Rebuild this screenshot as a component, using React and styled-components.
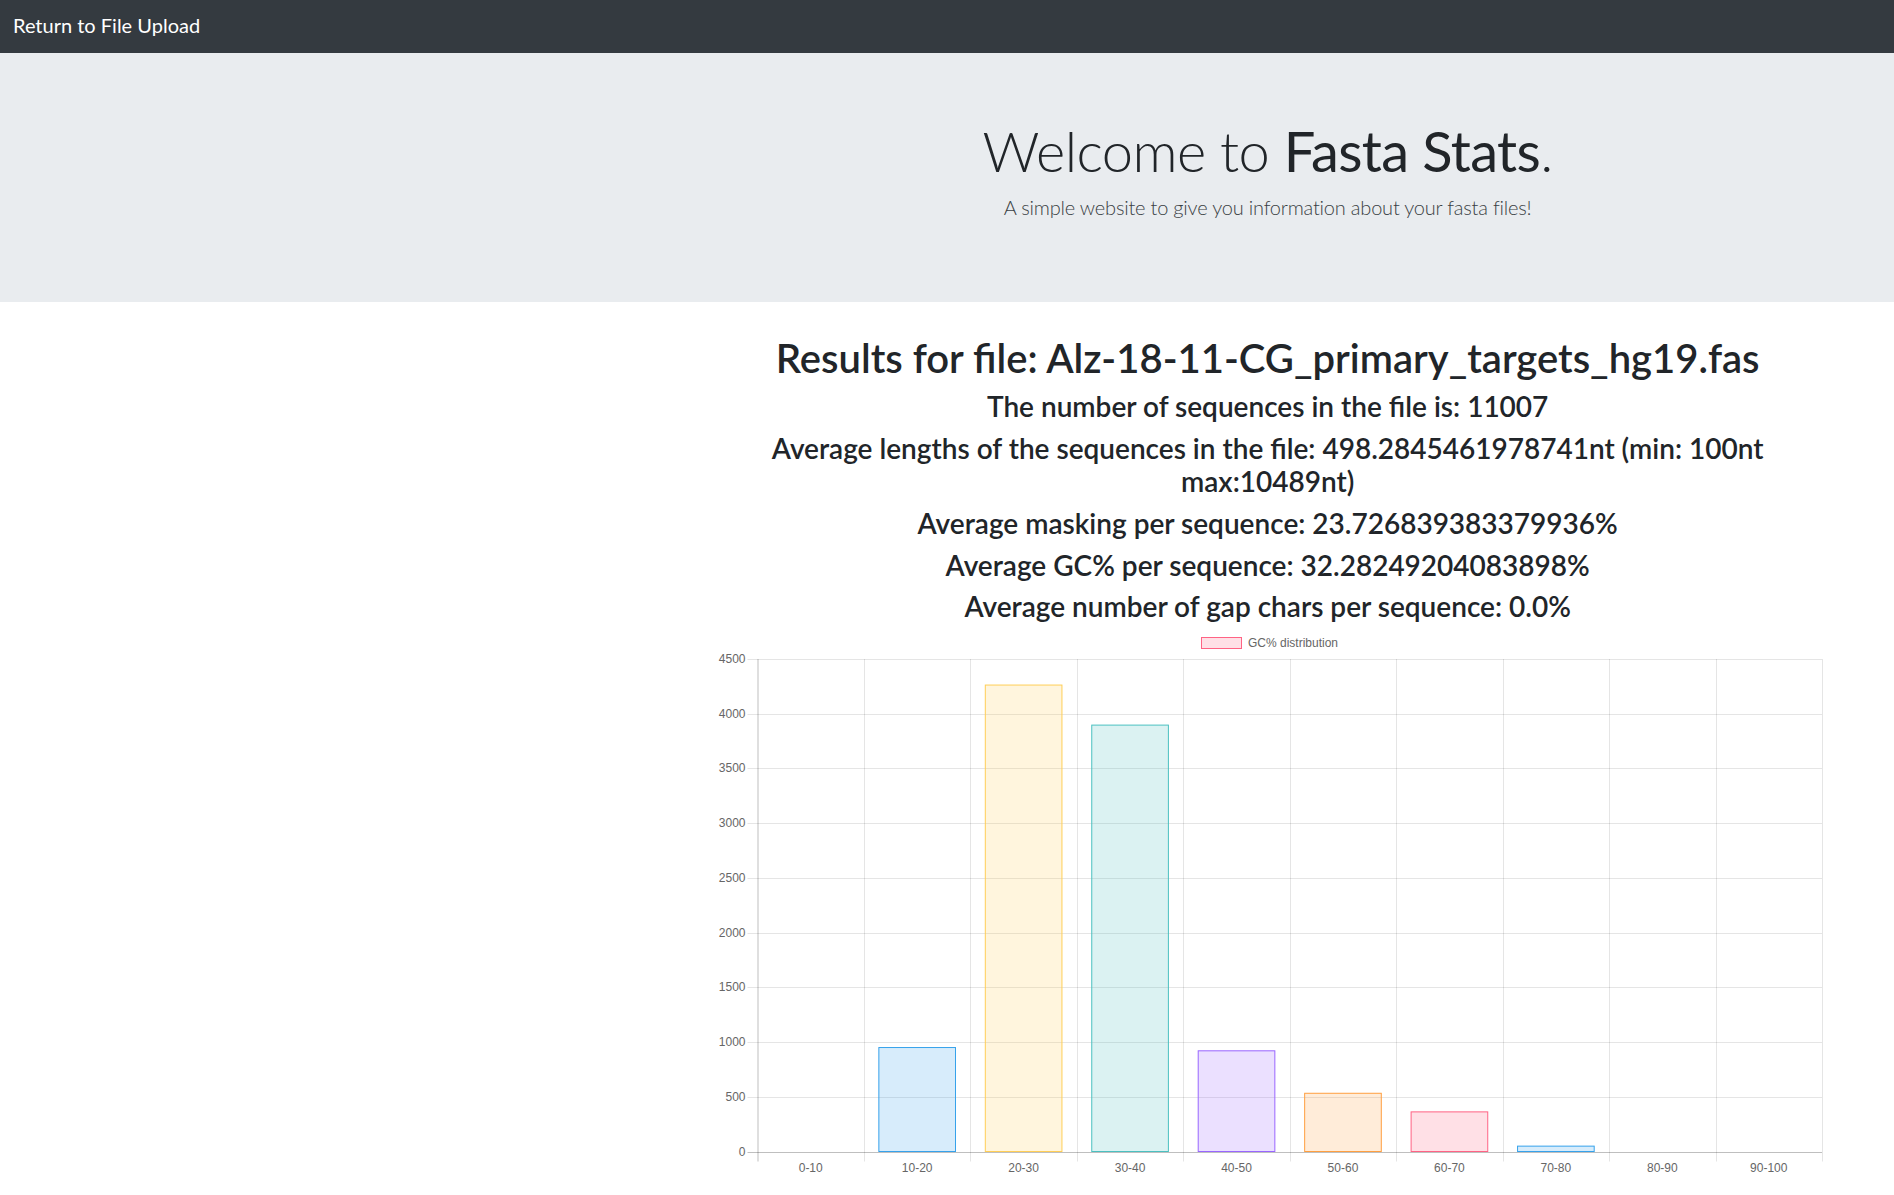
import React from "react";
import styled, { createGlobalStyle } from "styled-components";

const GlobalStyle = createGlobalStyle`
  body {
    margin: 0;
    font-family: "Lato", "Open Sans", sans-serif;
    color: #212529;
    background: #fff;
    overflow-x: hidden;
  }
`;

const bins = [
  { label: "0-10", value: 0, color: "255, 99, 132" },
  { label: "10-20", value: 950, color: "54, 162, 235" },
  { label: "20-30", value: 4262, color: "255, 206, 86" },
  { label: "30-40", value: 3896, color: "75, 192, 192" },
  { label: "40-50", value: 920, color: "153, 102, 255" },
  { label: "50-60", value: 532, color: "255, 159, 64" },
  { label: "60-70", value: 362, color: "255, 99, 132" },
  { label: "70-80", value: 49, color: "54, 162, 235" },
  { label: "80-90", value: 0, color: "255, 206, 86" },
  { label: "90-100", value: 0, color: "75, 192, 192" },
];

export default function App() {
  return (
    <>
      <GlobalStyle />
      <Navbar>
        <Brand href="#">Return to File Upload</Brand>
      </Navbar>
      <Jumbotron>
        <Row>
          <Col span={8} offset={4}>
            <Display>
              Welcome to <strong>Fasta Stats</strong>.
            </Display>
            <Lead>A simple website to give you information about your fasta files!</Lead>
          </Col>
        </Row>
      </Jumbotron>
      <Row>
        <Col span={8} offset={4}>
          <Container>
            <ResultTitle>Results for file: Alz-18-11-CG_primary_targets_hg19.fas</ResultTitle>
            <Stat>The number of sequences in the file is: 11007</Stat>
            <Stat>
              Average lengths of the sequences in the file: 498.2845461978741nt (min: 100nt
              max:10489nt)
            </Stat>
            <Stat>Average masking per sequence: 23.726839383379936%</Stat>
            <Stat>Average GC% per sequence: 32.28249204083898%</Stat>
            <Stat>Average number of gap chars per sequence: 0.0%</Stat>
            <GcChart data={bins} />
          </Container>
        </Col>
      </Row>
    </>
  );
}

function GcChart({ data }) {
  const width = 1110;
  const height = 556;
  const left = 44.5;
  const right = 1109;
  const top = 27;
  const zero = 519.5;
  const max = 4500;
  const cat = (right - left) / data.length;
  const y = v => zero - (v / max) * (zero - top);
  const ticks = [0, 500, 1000, 1500, 2000, 2500, 3000, 3500, 4000, 4500];

  return (
    <ChartSvg width={width} height={height} viewBox={`0 0 ${width} ${height}`}>
      <rect x="488.5" y="5.5" width="40" height="11" fill="rgba(255,99,132,0.2)" stroke="rgb(255,99,132)" strokeWidth="1" />
      <text x="535" y="14.5" fontSize="12" fill="#666" fontFamily="Liberation Sans, Arial, sans-serif">
        GC% distribution
      </text>

      {ticks.map(t => (
        <g key={t}>
          <line
            x1={left - 10}
            x2={right}
            y1={Math.round(y(t)) + 0.5}
            y2={Math.round(y(t)) + 0.5}
            stroke={t === 0 ? "rgba(0,0,0,0.25)" : "rgba(0,0,0,0.1)"}
          />
          <text
            x={left - 12}
            y={y(t) + 4}
            textAnchor="end"
            fontSize="12"
            fill="#666"
            fontFamily="Liberation Sans, Arial, sans-serif"
          >
            {t}
          </text>
        </g>
      ))}

      {data.map((d, i) => (
        <line
          key={"v" + i}
          x1={Math.round(left + (i + 1) * cat) + 0.5}
          x2={Math.round(left + (i + 1) * cat) + 0.5}
          y1={top}
          y2={zero + 10}
          stroke="rgba(0,0,0,0.1)"
        />
      ))}
      <line x1={left + 0.5} x2={left + 0.5} y1={top} y2={zero + 10} stroke="rgba(0,0,0,0.25)" />

      {data.map((d, i) => {
        const bw = cat * 0.72;
        const bx = left + i * cat + (cat - bw) / 2;
        const by = y(d.value);
        return (
          <g key={d.label}>
            {d.value > 0 && (
              <rect
                x={bx}
                y={by}
                width={bw}
                height={zero - by}
                fill={`rgba(${d.color}, 0.2)`}
                stroke={`rgb(${d.color})`}
                strokeWidth="1"
              />
            )}
            <text
              x={left + i * cat + cat / 2}
              y={540}
              textAnchor="middle"
              fontSize="12"
              fill="#666"
              fontFamily="Liberation Sans, Arial, sans-serif"
            >
              {d.label}
            </text>
          </g>
        );
      })}
    </ChartSvg>
  );
}

const Navbar = styled.nav`
  height: 53px;
  box-sizing: border-box;
  background: #343a40;
  display: flex;
  align-items: center;
  padding: 0 13px 3px;
`;

const Brand = styled.a`
  color: #fff;
  font-size: 20px;
  text-decoration: none;
  line-height: 1.5;
`;

const Jumbotron = styled.div`
  background: #e9ecef;
  padding: 64px 0;
  margin-bottom: 32px;
`;

const Row = styled.div`
  display: flex;
  margin: 0 -15px;
`;

const Col = styled.div`
  flex: 0 0 ${p => (p.span / 12) * 100}%;
  max-width: ${p => (p.span / 12) * 100}%;
  margin-left: ${p => ((p.offset || 0) / 12) * 100}%;
  padding: 0 15px;
  box-sizing: border-box;
  text-align: center;
`;

const Container = styled.div`
  width: 100%;
  max-width: 1140px;
  margin: 0 auto;
  padding: 0 15px;
  box-sizing: border-box;
`;

const Display = styled.h1`
  font-size: 56px;
  font-weight: 300;
  line-height: 1.2;
  letter-spacing: -0.6px;
  margin: 0 0 8px;
  strong {
    font-weight: 400;
  }
`;

const Lead = styled.p`
  font-size: 20px;
  font-weight: 300;
  line-height: 1.5;
  letter-spacing: -0.2px;
  margin: 0 0 16px;
  color: #3a3f44;
`;

const ResultTitle = styled.h1`
  font-size: 40px;
  font-weight: 600;
  line-height: 1.2;
  margin: 0 0 8px;
`;

const Stat = styled.h3`
  font-size: 28px;
  font-weight: 600;
  line-height: 1.2;
  margin: 0 0 8px;
`;

const ChartSvg = styled.svg`
  display: block;
  margin: 0 auto;
`;
